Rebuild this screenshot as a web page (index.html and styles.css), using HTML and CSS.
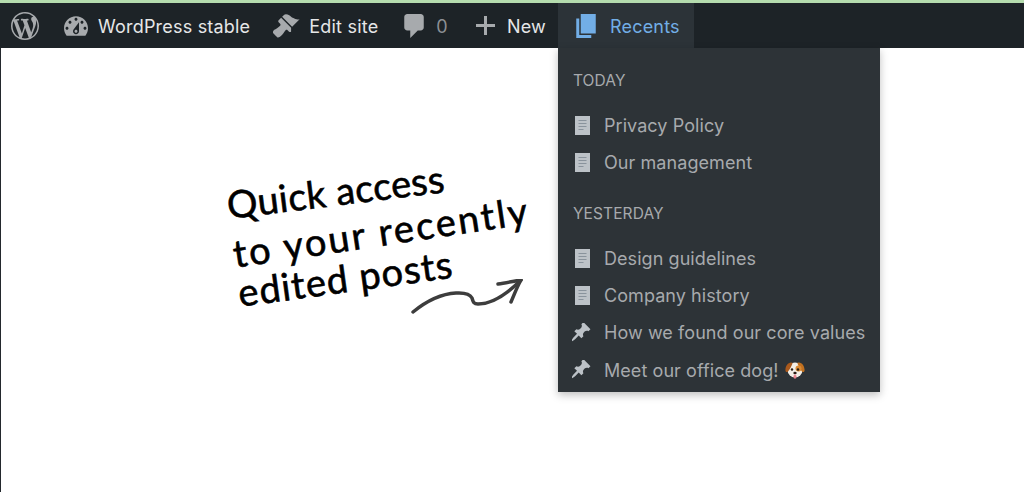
FILE: index.html
```html
<!DOCTYPE html>
<html lang="en">

<head>
    <meta charset="UTF-8">
    <meta name="viewport" content="width=device-width, initial-scale=1.0">
    <title>Recents</title>
    <link rel="stylesheet" href="styles.css">
</head>

<body>
    <div class="top-line"></div>
    <nav class="adminbar">
        <a class="bar-logo">
            <svg viewBox="0 0 20 20"><path d="M20 10c0-5.51-4.49-10-10-10C4.48 0 0 4.49 0 10c0 5.52 4.48 10 10 10 5.51 0 10-4.48 10-10zM7.78 15.37L4.37 6.22c.55-.02 1.17-.08 1.17-.08.5-.06.44-1.13-.06-1.11 0 0-1.45.11-2.37.11-.18 0-.37 0-.58-.01C4.12 2.69 6.87 1.11 10 1.11c2.33 0 4.45.87 6.05 2.34-.68-.11-1.65.39-1.65 1.58 0 .74.45 1.36.9 2.1.35.61.55 1.36.55 2.46 0 1.49-1.4 5-1.4 5l-3.03-8.37c.54-.02.82-.17.82-.17.5-.05.44-1.25-.06-1.22 0 0-1.44.12-2.38.12-.87 0-2.33-.12-2.33-.12-.5-.03-.56 1.2-.06 1.22l.92.08 1.26 3.41zM17.41 10c.24-.64.74-1.87.43-4.25.7 1.29 1.05 2.71 1.05 4.25 0 3.29-1.73 6.24-4.4 7.78.97-2.59 1.94-5.2 2.92-7.78zM6.1 18.09C3.12 16.65 1.11 13.53 1.11 10c0-1.3.23-2.48.72-3.59C3.25 10.3 4.67 14.2 6.1 18.09zm4.03-6.63l2.58 6.98c-.86.29-1.76.45-2.71.45-.79 0-1.57-.11-2.29-.33.81-2.38 1.62-4.74 2.42-7.1z"/></svg>
        </a>
        <a class="bar-item site">
            <svg viewBox="2 3 16 13"><path d="M3.76 16h12.48c1.1-1.37 1.76-3.11 1.76-5 0-4.42-3.58-8-8-8s-8 3.58-8 8c0 1.89.66 3.63 1.76 5zM10 4c.55 0 1 .45 1 1s-.45 1-1 1-1-.45-1-1 .45-1 1-1zM6 6c.55 0 1 .45 1 1s-.45 1-1 1-1-.45-1-1 .45-1 1-1zm8 0c.55 0 1 .45 1 1s-.45 1-1 1-1-.45-1-1 .45-1 1-1zm-5.37 5.55L12 7v6c0 1.1-.9 2-2 2s-2-.9-2-2c0-.57.24-1.08.63-1.45zM4 10c.55 0 1 .45 1 1s-.45 1-1 1-1-.45-1-1 .45-1 1-1zm12 0c.55 0 1 .45 1 1s-.45 1-1 1-1-.45-1-1 .45-1 1-1zm-5 3c0-.55-.45-1-1-1s-1 .45-1 1 .45 1 1 1 1-.45 1-1z"/></svg>
            <span>WordPress stable</span>
        </a>
        <a class="bar-item edit">
            <svg viewBox="1 2 19 17"><path d="M14.48 11.06L7.41 3.99l1.5-1.5c.5-.56 2.3-.47 3.51.32 1.21.8 1.43 1.28 2.91 2.1 1.18.64 2.45 1.26 4.45.85zm-.71.71L6.7 4.7 4.93 6.47c-.39.39-.39 1.02 0 1.41l1.06 1.06c.39.39.39 1.03 0 1.42-.6.6-1.43 1.11-2.21 1.69-.35.26-.7.53-1.01.84C1.43 13.23.4 14.75 1.1 15.6c.53.64 2.14 2.14 2.8 2.8.7.7 2.23-.28 3.58-1.68.26-.27.49-.56.7-.86.59-.85 1.09-1.8 1.67-2.39.39-.39 1.02-.39 1.41 0l1.06 1.06c.39.39 1.03.39 1.42 0z"/></svg>
            <span>Edit site</span>
        </a>
        <a class="bar-item comments">
            <svg viewBox="3 2 13 16"><path d="M5 2h9c1.1 0 2 .9 2 2v7c0 1.1-.9 2-2 2h-2l-5 5v-5H5c-1.1 0-2-.9-2-2V4c0-1.1.9-2 2-2z"/></svg>
            <span>0</span>
        </a>
        <a class="bar-item new">
            <svg viewBox="0 0 19 19"><path d="M8 0h3v8h8v3h-8v8H8v-8H0V8h8z"/></svg>
            <span>New</span>
        </a>
        <div class="recents">
            <a class="recents-link">
                <svg viewBox="3 2 13 16"><path d="M6 15V2h10v13H6zm-1 1h8v2H3V5h2v11z"/></svg>
                <span>Recents</span>
            </a>
            <div class="dropdown">
                <h4 class="group-title first">Today</h4>
                <ul class="post-list">
                    <li>
                        <svg class="doc" viewBox="0 0 15 19"><use href="#doc-icon"/></svg>
                        Privacy Policy
                    </li>
                    <li>
                        <svg class="doc" viewBox="0 0 15 19"><use href="#doc-icon"/></svg>
                        Our management
                    </li>
                </ul>
                <h4 class="group-title">Yesterday</h4>
                <ul class="post-list">
                    <li>
                        <svg class="doc" viewBox="0 0 15 19"><use href="#doc-icon"/></svg>
                        Design guidelines
                    </li>
                    <li>
                        <svg class="doc" viewBox="0 0 15 19"><use href="#doc-icon"/></svg>
                        Company history
                    </li>
                    <li>
                        <svg class="pin" viewBox="1 1 18 18"><use href="#pin-icon"/></svg>
                        How we found our core values
                    </li>
                    <li>
                        <svg class="pin" viewBox="1 1 18 18"><use href="#pin-icon"/></svg>
                        Meet our office dog!
                        <svg class="dog" viewBox="0 0 20 20">
                            <ellipse cx="10" cy="10" rx="7.5" ry="7.5" fill="#f3eee6"/>
                            <path d="M6 2.6C3 2.8.6 6 .4 10c-.1 2 1.6 2.8 2.8 1.2C5 9 6.6 6 7.6 3.2 7.4 2.8 6.8 2.6 6 2.6z" fill="#a9591c"/>
                            <path d="M14 2.6c3 .2 5.4 3.4 5.6 7.4.1 2-1.6 2.8-2.8 1.2-1.8-2.2-3.4-5.2-4.4-8 .2-.4 1-.6 1.6-.6z" fill="#c0701f"/>
                            <circle cx="13.5" cy="8.5" r="3" fill="#d98a34"/>
                            <circle cx="7" cy="9.5" r="1.2" fill="#2a1d14"/>
                            <circle cx="13" cy="9.5" r="1.2" fill="#2a1d14"/>
                            <ellipse cx="10" cy="13" rx="1.7" ry="1.2" fill="#2a1d14"/>
                            <ellipse cx="10" cy="16.6" rx="1.5" ry="2.2" fill="#e8838d"/>
                        </svg>
                    </li>
                </ul>
            </div>
        </div>
    </nav>

    <main class="page">
        <div class="note">
            <p class="note-line first-line">Quick access</p>
            <p class="note-line second-line">to your recently</p>
            <p class="note-line third-line">edited posts</p>
        </div>
        <svg class="arrow" viewBox="0 0 116 38">
            <path d="M3 33C14 24 28 15 46 14c8-.5 14 1 16 5 1 3 1 6 6 6 14 0 30-11 43-24"/>
            <path d="M88 5c8-1 16-3 23-4-4 7-7 15-10 22"/>
        </svg>
    </main>

    <svg class="icon-defs">
        <symbol id="doc-icon" viewBox="0 0 15 19">
            <path d="M0 0h15v19H0z"/>
            <path class="doc-lines" d="M3.5 4.5h8M3.5 7.5h8M3.5 10.5h8M3.5 13.5h5"/>
        </symbol>
        <symbol id="pin-icon" viewBox="1 1 18 18">
            <path d="M10.44 3.02l1.82-1.82 6.36 6.35-1.83 1.82c-1.05-.68-2.48-.57-3.41.36l-.75.75c-.92.93-1.04 2.35-.35 3.41l-1.83 1.82-2.41-2.41-2.8 2.79c-.42.42-3.38 2.71-3.8 2.29s1.86-3.39 2.28-3.81l2.79-2.79L4.1 9.36l1.83-1.82c1.05.69 2.48.57 3.4-.36l.75-.75c.93-.92 1.05-2.35.36-3.41z"/>
        </symbol>
    </svg>
</body>

</html>
```

FILE: styles.css
```css
html,
body {
    margin: 0;
    height: 100%;
}

body {
    display: flex;
    flex-direction: column;
    height: 492px;
    overflow: hidden;
    background: #fff;
    font-family: Inter, "Noto Sans", sans-serif;
    font-size: 18px;
}

.top-line {
    height: 3px;
    background: #b5dcae;
}

.adminbar {
    display: flex;
    align-items: stretch;
    height: 45px;
    background: #1d2327;
    color: #e6e7e8;
}

.adminbar svg {
    fill: #a7aaad;
    flex: none;
}

.bar-item span,
.recents-link span {
    padding-top: 2px;
    letter-spacing: 0.2px;
}

.bar-logo {
    display: flex;
    align-items: center;
    margin-left: 11px;
    margin-right: 13px;
}

.bar-logo svg {
    width: 28px;
    height: 28px;
}

.bar-item {
    display: flex;
    align-items: center;
    padding: 0 12px;
    gap: 10px;
}

.site svg {
    width: 24px;
    height: 20px;
}

.edit {
    gap: 9px;
    padding-left: 11px;
}

.edit svg {
    width: 27px;
    height: 24px;
}

.comments {
    gap: 12px;
    padding-left: 14px;
    padding-right: 16px;
    color: #8c8f94;
}

.comments svg {
    width: 20px;
    height: 24px;
}

.new {
    gap: 12px;
}

.new svg {
    width: 19px;
    height: 19px;
}

.recents {
    position: relative;
    display: flex;
}

.recents-link {
    display: flex;
    align-items: center;
    gap: 14px;
    padding: 0 14px 0 18px;
    background: #2c3338;
    color: #72aee6;
}

.adminbar .recents-link svg {
    width: 20px;
    height: 24px;
    fill: #72aee6;
}

.dropdown {
    position: absolute;
    top: 45px;
    left: 0;
    width: 322px;
    height: 344px;
    box-sizing: border-box;
    padding: 23px 15px 0;
    background: #2d3337;
    color: #a7aaad;
    box-shadow: 0 3px 8px rgba(0, 0, 0, 0.25);
}

.group-title {
    margin: 22px 0 16px;
    font-size: 15.5px;
    line-height: 20px;
    font-weight: 400;
    letter-spacing: 0.1px;
    text-transform: uppercase;
}

.group-title.first {
    margin-top: 0;
    margin-bottom: 16px;
}

.post-list {
    list-style: none;
    margin: 0;
    padding: 0;
}

.post-list li {
    display: flex;
    align-items: center;
    height: 37.33px;
    letter-spacing: 0.07px;
    white-space: nowrap;
}

.adminbar .doc {
    width: 15px;
    height: 19px;
    margin: 0 14px 0 2px;
    fill: #bcc2c7;
}

.doc-lines {
    fill: none;
    stroke: #7c8790;
    stroke-width: 0.8;
}

.adminbar .pin {
    width: 20px;
    height: 20px;
    margin: 0 12px 0 -1px;
    fill: #bcc2c7;
}

.adminbar .dog {
    width: 20px;
    height: 20px;
    margin-left: 6px;
}

.page {
    position: relative;
    flex: 1;
    border-left: 1px solid #23282d;
}

/* hand written note, sits free on the white page */
.note {
    position: absolute;
    top: 136px;
    left: 226px;
    font-family: "Lato", sans-serif;
    font-size: 38px;
    line-height: 40px;
    color: #000;
}

.note-line {
    margin: 0;
    white-space: nowrap;
    transform-origin: 0 50%;
    -webkit-text-stroke: 0.6px #000;
}

.first-line {
    letter-spacing: 0.3px;
    transform: rotate(-7deg);
}

.second-line {
    margin-top: 9px;
    margin-left: 6px;
    letter-spacing: 2.3px;
    transform: rotate(-8.5deg);
}

.third-line {
    margin-top: -1px;
    margin-left: 11px;
    letter-spacing: 1px;
    transform: rotate(-7.8deg);
}

.arrow {
    position: absolute;
    top: 231px;
    left: 409px;
    width: 116px;
    height: 38px;
    fill: none;
    stroke: #3d3d3d;
    stroke-width: 3.5;
    stroke-linecap: round;
    stroke-linejoin: round;
}

.icon-defs {
    display: none;
}
```
